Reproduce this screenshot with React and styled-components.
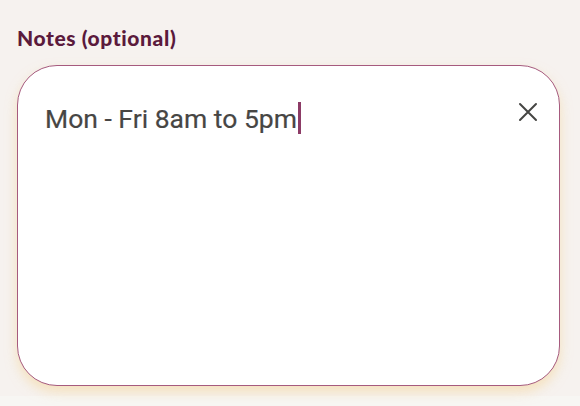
import styled, { createGlobalStyle } from "styled-components";

const Global = createGlobalStyle`
  html, body {
    margin: 0;
    padding: 0;
    background: #f6f2ef;
  }
`;

const Page = styled.div`
  width: 580px;
  height: 406px;
  box-sizing: border-box;
  display: flex;
  flex-direction: column;
  background: linear-gradient(#f6f2ef 0, #f6f2ef 396px, #f7f6f3 396px);
  overflow: hidden;
`;

const Field = styled.div`
  padding: 25px 20px 0 17px;
  display: flex;
  flex-direction: column;
  gap: 14px;
`;

const Label = styled.label`
  font-family: "Lato", sans-serif;
  font-weight: 900;
  font-size: 21px;
  line-height: 26px;
  color: #5b1a3c;
  letter-spacing: 0.6px;
`;

const Box = styled.div`
  position: relative;
  height: 321px;
  box-sizing: border-box;
  background: #fff;
  border: 1.5px solid #a65a7e;
  border-radius: 40px;
  box-shadow: 0 6px 12px rgba(244, 212, 150, 0.55);
  padding: 36px 60px 0 27px;
`;

const Value = styled.div`
  font-family: "Roboto", sans-serif;
  font-size: 26.5px;
  color: #474644;
  -webkit-text-stroke: 0.2px #474644;
  display: flex;
  align-items: center;
`;

const Caret = styled.span`
  display: inline-block;
  width: 3px;
  height: 32px;
  margin-left: 1px;
  background: #8c3b66;
`;

const Clear = styled.button`
  position: absolute;
  top: 34px;
  right: 19px;
  width: 24px;
  height: 24px;
  padding: 0;
  border: none;
  background: transparent;
  display: flex;
  align-items: center;
  justify-content: center;
`;

export default function App() {
  return (
    <>
      <Global />
      <Page>
        <Field>
          <Label>Notes (optional)</Label>
          <Box>
            <Value>
              Mon - Fri 8am to 5pm
              <Caret />
            </Value>
            <Clear aria-label="clear">
              <svg width="20" height="20" viewBox="0 0 20 20">
                <path
                  d="M2 2 L18 18 M18 2 L2 18"
                  stroke="#454543"
                  strokeWidth="2"
                  strokeLinecap="round"
                />
              </svg>
            </Clear>
          </Box>
        </Field>
      </Page>
    </>
  );
}
